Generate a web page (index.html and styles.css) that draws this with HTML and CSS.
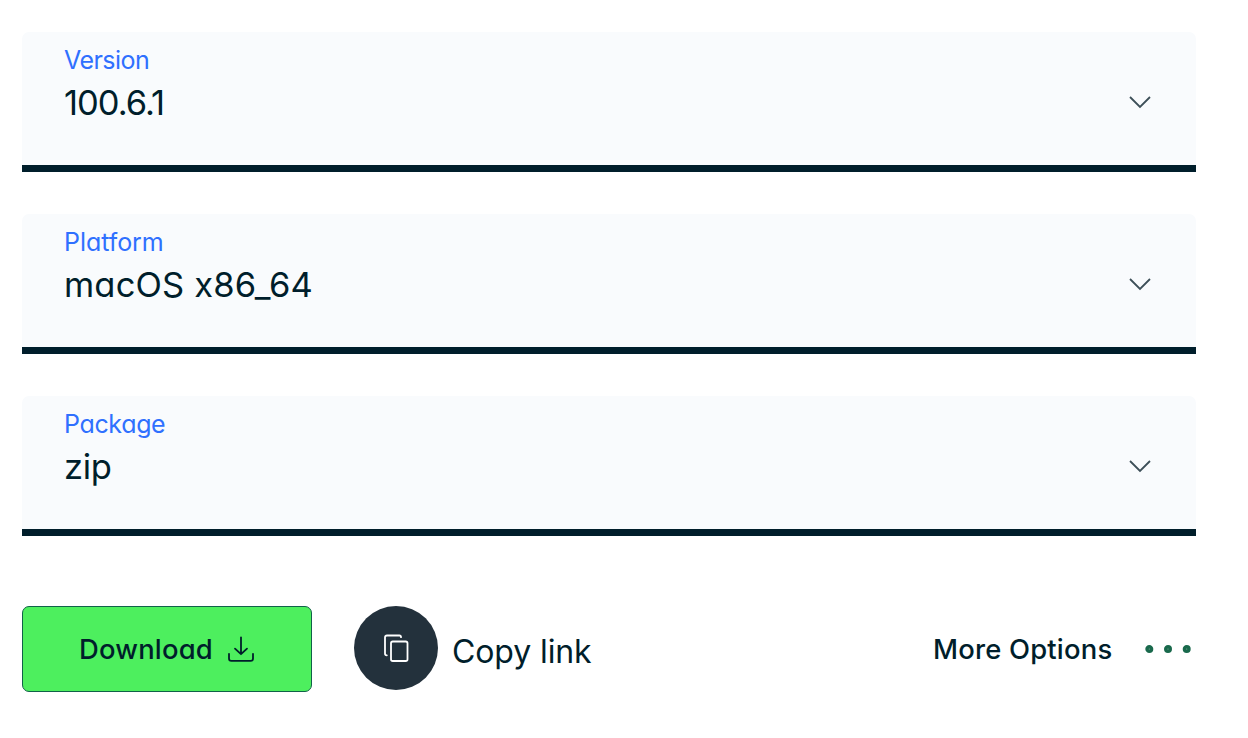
FILE: index.html
```html
<!DOCTYPE html>
<html lang="en">
<head>
<meta charset="utf-8">
<title>Download</title>
<link rel="stylesheet" href="styles.css">
</head>
<body>
<main class="panel">
  <div class="field">
    <div class="field-text">
      <span class="label label-version">Version</span>
      <span class="value value-version">100.6.1</span>
    </div>
    <svg class="chevron" width="24" height="14" viewBox="0 0 24 14"><path d="M2 2 12 12 22 2"/></svg>
  </div>
  <div class="field">
    <div class="field-text">
      <span class="label label-platform">Platform</span>
      <span class="value value-platform">macOS x86_64</span>
    </div>
    <svg class="chevron" width="24" height="14" viewBox="0 0 24 14"><path d="M2 2 12 12 22 2"/></svg>
  </div>
  <div class="field">
    <div class="field-text">
      <span class="label label-package">Package</span>
      <span class="value value-package">zip</span>
    </div>
    <svg class="chevron" width="24" height="14" viewBox="0 0 24 14"><path d="M2 2 12 12 22 2"/></svg>
  </div>
  <div class="actions">
    <button class="download"><span class="download-text">Download</span>
      <svg class="icon" width="28" height="28" viewBox="0 0 28 28"><path d="M14 2.300V19M8 13.600 14 19.200 20 13.600M2 18.800V23.400Q2 25.800 4.400 25.800H23.600Q26 25.800 26 23.400V18.800"/></svg>
    </button>
    <button class="copy">
      <svg class="icon" width="28" height="30" viewBox="0 0 28 30"><path d="M19 4.200V3.900Q19 2.500 17.500 2.500H5Q3 2.500 3 4.500V20.500Q3 22.300 4.800 22.300"/><rect x="9" y="8.500" width="16.500" height="19.500" rx="1.800"/></svg>
    </button>
    <span class="copy-text">Copy link</span>
    <span class="more-text">More Options</span>
    <svg class="dots" width="48" height="10" viewBox="0 0 48 10"><circle cx="4.300" cy="5" r="2.300"/><circle cx="23" cy="5" r="2.300"/><circle cx="41.700" cy="5" r="2.300"/></svg>
  </div>
</main>
</body>
</html>
```
FILE: styles.css
```css
body {
  margin: 0;
  background: #fff;
  color: #001e2b;
  font-family: Inter, "Liberation Sans", sans-serif;
  font-feature-settings: "cv11";
}
.panel {
  display: flex;
  flex-direction: column;
  gap: 42px;
  width: 1174px;
  padding: 32px 0 0 22px;
}
.field {
  display: flex;
  justify-content: space-between;
  box-sizing: border-box;
  height: 140px;
  padding: 12px 44px 0 42px;
  background: #f9fbfd;
  background-clip: padding-box;
  border-bottom: 7px solid #001e2b;
  border-radius: 7px 7px 0 0;
}
.field-text {
  display: flex;
  flex-direction: column;
}
.label {
  height: 32px;
  line-height: 32px;
  font-size: 25px;
  color: #2f70ff;
}
.label-version {
  letter-spacing: -0.55px;
}
.label-platform {
  letter-spacing: -0.05px;
}
.label-package {
  letter-spacing: -0.35px;
}
.value {
  height: 52px;
  line-height: 54px;
  font-size: 34.5px;
}
.value-version {
  letter-spacing: -1px;
}
.value-platform {
  letter-spacing: 0.15px;
}
.value-package {
  letter-spacing: -0.3px;
}
.chevron {
  margin-top: 51px;
  fill: none;
  stroke: #3d4f58;
  stroke-width: 1.8;
}
.actions {
  display: flex;
  height: 86px;
  margin-top: 28px;
}
button {
  display: flex;
  align-items: center;
  justify-content: center;
  box-sizing: border-box;
  padding: 0;
  font: inherit;
  font-feature-settings: inherit;
  color: inherit;
}
.download {
  width: 290px;
  height: 86px;
  justify-content: flex-start;
  padding-left: 56px;
  gap: 14px;
  background: #4def5e;
  border: 1px solid #116149;
  border-radius: 7px;
}
.download-text {
  width: 134px;
  padding-bottom: 1px;
  font-size: 27.4px;
  font-weight: 500;
  letter-spacing: 0.2px;
  text-align: left;
  white-space: nowrap;
}
.icon {
  flex: none;
  fill: none;
  stroke: currentColor;
  stroke-width: 1.8;
  stroke-linecap: round;
  stroke-linejoin: round;
}
.copy {
  width: 84px;
  height: 84px;
  margin-left: 42px;
  color: #fff;
  background: #23313c;
  border: 0;
  border-radius: 50%;
}
.copy-text {
  width: 150px;
  margin-left: 14px;
  line-height: 91px;
  font-size: 32px;
  letter-spacing: -0.1px;
  white-space: nowrap;
}
.more-text {
  width: 212px;
  margin-left: auto;
  line-height: 87px;
  font-size: 27.4px;
  font-weight: 500;
  letter-spacing: 0.2px;
  white-space: nowrap;
}
.dots {
  margin: 38px 3px 0 0;
  fill: #7fb39c;
  stroke: #19694c;
  stroke-width: 3.4;
}
```
